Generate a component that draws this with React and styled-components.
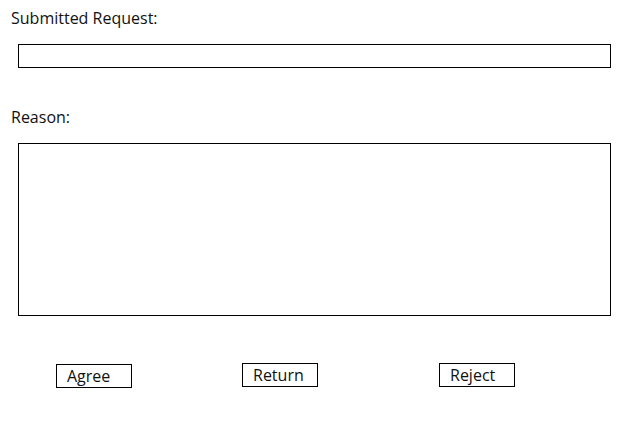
import React from "react";
import styled, { createGlobalStyle } from "styled-components";

const GlobalStyle = createGlobalStyle`
  html, body {
    margin: 0;
    padding: 0;
    background: #ffffff;
  }
  body {
    font-family: "Open Sans", "Noto Sans", sans-serif;
    color: #000000;
  }
`;

const Page = styled.div`
  width: 641px;
  height: 435px;
  padding-top: 8px;
  box-sizing: border-box;
  display: flex;
  flex-direction: column;
`;

const Label = styled.div`
  margin-left: 11px;
  margin-top: ${({ $top }) => $top || 0}px;
  font-size: 16px;
  line-height: 20px;
  color: #111111;
`;

const Field = styled.div`
  margin-left: 18px;
  margin-top: 16px;
  width: 593px;
  height: ${({ $height }) => $height}px;
  border: 1px solid #000000;
  box-sizing: border-box;
  background: #ffffff;
`;

const ButtonRow = styled.div`
  display: flex;
  align-items: flex-start;
  margin-top: 47px;
`;

const Button = styled.button`
  margin-left: ${({ $left }) => $left}px;
  margin-top: ${({ $drop }) => $drop || 0}px;
  width: 76px;
  height: 24px;
  padding: 0 0 0 10px;
  border: 1px solid #000000;
  background: #ffffff;
  font-family: "Open Sans", "Noto Sans", sans-serif;
  font-size: 16px;
  line-height: 21px;
  color: #111111;
  text-align: left;
  box-sizing: border-box;
  cursor: pointer;
`;

export default function App() {
  return (
    <>
      <GlobalStyle />
      <Page>
        <Label>Submitted Request:</Label>
        <Field $height={24} />
        <Label $top={39}>Reason:</Label>
        <Field $height={173} />
        <ButtonRow>
          <Button $left={56} $drop={1}>Agree</Button>
          <Button $left={110}>Return</Button>
          <Button $left={121}>Reject</Button>
        </ButtonRow>
      </Page>
    </>
  );
}
